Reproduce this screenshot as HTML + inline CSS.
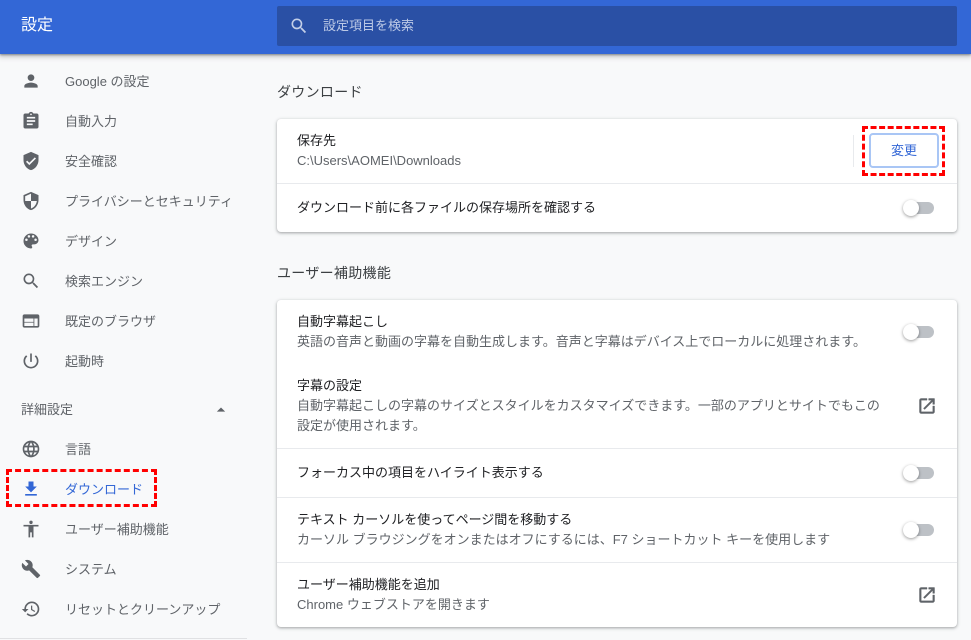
<!DOCTYPE html>
<html lang="ja"><head><meta charset="utf-8"><title>設定</title>
<style>
*{box-sizing:border-box}
html,body{margin:0;padding:0}
body{width:971px;height:640px;overflow:hidden;position:relative;background:#f8f9fa;font-family:"Liberation Sans","Noto Sans CJK JP",sans-serif;font-size:13px;color:#202124}
.t{position:absolute;white-space:nowrap;line-height:20px}
#hdr{position:absolute;left:0;top:0;width:971px;height:54px;background:#3367d6;box-shadow:0 1px 2px rgba(60,64,67,.5),0 2px 5px 1px rgba(60,64,67,.25)}
#srch{position:absolute;left:277px;top:6px;width:680px;height:40px;background:#2a50a5;border-radius:2px}
.nav{position:absolute;left:65px;color:#5f6368;line-height:20px;white-space:nowrap;font-size:13px}
svg.i{position:absolute;width:20px;height:20px;margin:2px;fill:#5f6368}
.card{position:absolute;left:277px;width:680px;background:#fff;border-radius:4px;box-shadow:0 1px 2px rgba(60,64,67,.3),0 1px 3px 1px rgba(60,64,67,.15)}
.hr{position:absolute;left:277px;width:680px;height:1px;background:#e8eaed}
.h{position:absolute;left:277px;font-size:14px;letter-spacing:.3px;color:#3c4043;line-height:20px;white-space:nowrap}
.p{position:absolute;left:297px;color:#202124;font-size:13px;line-height:20px;white-space:nowrap}
.s{position:absolute;left:297px;color:#5f6368;font-size:13px;line-height:20px;white-space:nowrap}
.tg{position:absolute;left:904px;width:30px;height:12px;background:#bdc1c6;border-radius:6px}
.tg:before{content:"";position:absolute;left:-1px;top:-2px;width:16px;height:16px;border-radius:50%;background:#fff;box-shadow:0 1px 3px rgba(0,0,0,.4)}
.ext{stroke:#5f6368;stroke-width:.5}
</style></head><body>
<div id="hdr"></div>
<div class="t" style="left:21px;top:16px;font-size:16px;color:#fff">設定</div>
<div id="srch"></div>
<svg class="i" style="left:287px;top:14px;fill:#c3cfe8" viewBox="0 0 24 24"><path d="M15.5 14h-.79l-.28-.27A6.47 6.47 0 0 0 16 9.5 6.5 6.5 0 1 0 9.5 16c1.61 0 3.09-.59 4.23-1.57l.27.28v.79l5 4.99L20.49 19l-4.99-5zm-6 0C7.01 14 5 11.99 5 9.5S7.01 5 9.5 5 14 7.01 14 9.5 11.99 14 9.5 14z"/></svg>
<div class="t" style="left:323px;top:16px;color:#bcc9e6;font-size:13px">設定項目を検索</div>

<svg class="i" style="left:19px;top:69px" viewBox="0 0 24 24"><path d="M12 12c2.21 0 4-1.79 4-4s-1.79-4-4-4-4 1.79-4 4 1.79 4 4 4zm0 2c-2.67 0-8 1.34-8 4v2h16v-2c0-2.66-5.33-4-8-4z"/></svg>
<div class="nav" style="top:72px">Google の設定</div>
<svg class="i" style="left:19px;top:109px" viewBox="0 0 24 24"><path d="M19 3h-4.18C14.4 1.84 13.3 1 12 1c-1.3 0-2.4.84-2.82 2H5c-1.1 0-2 .9-2 2v14c0 1.1.9 2 2 2h14c1.1 0 2-.9 2-2V5c0-1.1-.9-2-2-2zm-7 0c.55 0 1 .45 1 1s-.45 1-1 1-1-.45-1-1 .45-1 1-1zm2 14H7v-2h7v2zm3-4H7v-2h10v2zm0-4H7V7h10v2z"/></svg>
<div class="nav" style="top:112px">自動入力</div>
<svg class="i" style="left:19px;top:149px" viewBox="0 0 24 24"><path d="M12 1L3 5v6c0 5.55 3.84 10.74 9 12 5.16-1.26 9-6.45 9-12V5l-9-4zm-2 16l-4-4 1.41-1.41L10 14.17l6.59-6.59L18 9l-8 8z"/></svg>
<div class="nav" style="top:152px">安全確認</div>
<svg class="i" style="left:19px;top:189px" viewBox="0 0 24 24"><path d="M12 1L3 5v6c0 5.55 3.84 10.74 9 12 5.16-1.26 9-6.45 9-12V5l-9-4zm0 10.99h7c-.53 4.12-3.28 7.79-7 8.94V12H5V6.3l7-3.11v8.8z"/></svg>
<div class="nav" style="top:192px">プライバシーとセキュリティ</div>
<svg class="i" style="left:19px;top:229px" viewBox="0 0 24 24"><path d="M12 3a9 9 0 0 0 0 18c.83 0 1.5-.67 1.5-1.5 0-.39-.15-.74-.39-1.01-.23-.26-.38-.61-.38-.99 0-.83.67-1.5 1.5-1.5H16c2.76 0 5-2.24 5-5 0-4.42-4.03-8-9-8zm-5.5 9a1.5 1.5 0 1 1 0-3 1.5 1.5 0 0 1 0 3zm3-4a1.5 1.5 0 1 1 0-3 1.5 1.5 0 0 1 0 3zm5 0a1.5 1.5 0 1 1 0-3 1.5 1.5 0 0 1 0 3zm3 4a1.5 1.5 0 1 1 0-3 1.5 1.5 0 0 1 0 3z"/></svg>
<div class="nav" style="top:232px">デザイン</div>
<svg class="i" style="left:19px;top:269px" viewBox="0 0 24 24"><path d="M15.5 14h-.79l-.28-.27A6.47 6.47 0 0 0 16 9.5 6.5 6.5 0 1 0 9.5 16c1.61 0 3.09-.59 4.23-1.57l.27.28v.79l5 4.99L20.49 19l-4.99-5zm-6 0C7.01 14 5 11.99 5 9.5S7.01 5 9.5 5 14 7.01 14 9.5 11.99 14 9.5 14z"/></svg>
<div class="nav" style="top:272px">検索エンジン</div>
<svg class="i" style="left:19px;top:309px" viewBox="0 0 24 24"><path d="M20 4H4c-1.1 0-2 .9-2 2v12c0 1.1.9 2 2 2h16c1.1 0 2-.9 2-2V6c0-1.1-.9-2-2-2zm-5 14H4v-4h11v4zm0-5H4V9h11v4zm5 5h-4V9h4v9z"/></svg>
<div class="nav" style="top:312px">既定のブラウザ</div>
<svg class="i" style="left:19px;top:349px" viewBox="0 0 24 24"><path d="M13 3h-2v10h2V3zm4.83 2.17l-1.42 1.42A6.92 6.92 0 0 1 19 12c0 3.87-3.13 7-7 7s-7-3.13-7-7c0-2.19 1.01-4.14 2.58-5.42L6.17 5.17A8.93 8.93 0 0 0 3 12a9 9 0 0 0 18 0c0-2.74-1.23-5.18-3.17-6.83z"/></svg>
<div class="nav" style="top:352px">起動時</div>

<div class="nav" style="left:21px;top:400px">詳細設定</div>
<svg class="i" style="left:209px;top:398px" viewBox="0 0 24 24"><path d="M7 14l5-5 5 5z"/></svg>

<svg class="i" style="left:19px;top:437px" viewBox="0 0 24 24"><path d="M11.99 2C6.47 2 2 6.48 2 12s4.47 10 9.99 10C17.52 22 22 17.52 22 12S17.52 2 11.99 2zm6.93 6h-2.95a15.65 15.65 0 0 0-1.38-3.56A8.03 8.03 0 0 1 18.92 8zM12 4.04c.83 1.2 1.48 2.53 1.91 3.96h-3.82c.43-1.43 1.08-2.76 1.91-3.96zM4.26 14C4.1 13.36 4 12.69 4 12s.1-1.36.26-2h3.38c-.08.66-.14 1.32-.14 2 0 .68.06 1.34.14 2H4.26zm.82 2h2.95c.32 1.25.78 2.45 1.38 3.56A7.987 7.987 0 0 1 5.08 16zm2.95-8H5.08a7.987 7.987 0 0 1 4.33-3.56A15.65 15.65 0 0 0 8.03 8zM12 19.96c-.83-1.2-1.48-2.53-1.91-3.96h3.82c-.43 1.43-1.08 2.76-1.91 3.96zM14.34 14H9.66c-.09-.66-.16-1.32-.16-2 0-.68.07-1.35.16-2h4.68c.09.65.16 1.32.16 2 0 .68-.07 1.34-.16 2zm.25 5.56c.6-1.11 1.06-2.31 1.38-3.56h2.95a8.03 8.03 0 0 1-4.33 3.56zM16.36 14c.08-.66.14-1.32.14-2 0-.68-.06-1.34-.14-2h3.38c.16.64.26 1.31.26 2s-.1 1.36-.26 2h-3.38z"/></svg>
<div class="nav" style="top:440px">言語</div>
<svg class="i" style="left:19px;top:477px;fill:#3367d6" viewBox="0 0 24 24"><path d="M19 9h-4V3H9v6H5l7 7 7-7zM5 18v2h14v-2H5z"/></svg>
<div class="nav" style="top:480px;color:#3367d6">ダウンロード</div>
<svg class="i" style="left:19px;top:517px" viewBox="0 0 24 24"><path d="M12 2a2 2 0 1 1 0 4 2 2 0 0 1 0-4zm9 7h-6v13h-2v-6h-2v6H9V9H3V7h18v2z"/></svg>
<div class="nav" style="top:520px">ユーザー補助機能</div>
<svg class="i" style="left:19px;top:557px" viewBox="0 0 24 24"><path d="M22.7 19l-9.1-9.1c.9-2.3.4-5-1.5-6.9-2-2-5-2.4-7.4-1.3L9 6 6 9 1.6 4.7C.4 7.1.9 10.1 2.9 12.1c1.9 1.9 4.6 2.4 6.9 1.5l9.1 9.1c.4.4 1 .4 1.4 0l2.3-2.3c.5-.4.5-1.1.1-1.4z"/></svg>
<div class="nav" style="top:560px">システム</div>
<svg class="i" style="left:19px;top:597px" viewBox="0 0 24 24"><path d="M13 3a9 9 0 0 0-9 9H1l3.89 3.89.07.14L9 12H6c0-3.87 3.13-7 7-7s7 3.13 7 7-3.13 7-7 7c-1.93 0-3.68-.79-4.94-2.06l-1.42 1.42A8.954 8.954 0 0 0 13 21a9 9 0 0 0 0-18zm-1 5v5l4.28 2.54.72-1.21-3.5-2.08V8H12z"/></svg>
<div class="nav" style="top:600px">リセットとクリーンアップ</div>
<div style="position:absolute;left:0;top:638px;width:247px;height:1px;background:#e0e1e3"></div>

<div style="position:absolute;left:6px;top:469px;width:151px;height:38px;border:3px dashed #f00"></div>

<div class="h" style="top:82px">ダウンロード</div>
<div class="card" style="top:119px;height:113px"></div>
<div class="p" style="top:131px">保存先</div>
<div class="s" style="top:151px">C:\Users\AOMEI\Downloads</div>
<div style="position:absolute;left:853px;top:135px;width:1px;height:32px;background:#e8eaed"></div>
<div style="position:absolute;left:869px;top:133px;width:70px;height:35px;border:2px solid #a9c6f5;border-radius:4px;background:#fff;color:#3367d6;font-size:13px;line-height:31px;text-align:center">変更</div>
<div style="position:absolute;left:862px;top:126px;width:83px;height:50px;border:3px dashed #f00"></div>
<div class="hr" style="top:183px"></div>
<div class="p" style="top:198px">ダウンロード前に各ファイルの保存場所を確認する</div>
<div class="tg" style="top:202px"></div>

<div class="h" style="top:263px">ユーザー補助機能</div>
<div class="card" style="top:300px;height:327px"></div>
<div class="p" style="top:312px">自動字幕起こし</div>
<div class="s" style="top:332px">英語の音声と動画の字幕を自動生成します。音声と字幕はデバイス上でローカルに処理されます。</div>
<div class="tg" style="top:326px"></div>
<div class="p" style="top:376px">字幕の設定</div>
<div class="s" style="top:396px">自動字幕起こしの字幕のサイズとスタイルをカスタマイズできます。一部のアプリとサイトでもこの</div>
<div class="s" style="top:416px">設定が使用されます。</div>
<svg class="i ext" style="left:915px;top:394px" viewBox="0 0 24 24"><path d="M19 19H5V5h7V3H5a2 2 0 0 0-2 2v14a2 2 0 0 0 2 2h14c1.1 0 2-.9 2-2v-7h-2v7zM14 3v2h3.59l-9.83 9.83 1.41 1.41L19 6.41V10h2V3h-7z"/></svg>
<div class="hr" style="top:448px"></div>
<div class="p" style="top:463px">フォーカス中の項目をハイライト表示する</div>
<div class="tg" style="top:467px"></div>
<div class="hr" style="top:497px"></div>
<div class="p" style="top:510px">テキスト カーソルを使ってページ間を移動する</div>
<div class="s" style="top:530px">カーソル ブラウジングをオンまたはオフにするには、F7 ショートカット キーを使用します</div>
<div class="tg" style="top:524px"></div>
<div class="hr" style="top:562px"></div>
<div class="p" style="top:575px">ユーザー補助機能を追加</div>
<div class="s" style="top:595px">Chrome ウェブストアを開きます</div>
<svg class="i ext" style="left:915px;top:583px" viewBox="0 0 24 24"><path d="M19 19H5V5h7V3H5a2 2 0 0 0-2 2v14a2 2 0 0 0 2 2h14c1.1 0 2-.9 2-2v-7h-2v7zM14 3v2h3.59l-9.83 9.83 1.41 1.41L19 6.41V10h2V3h-7z"/></svg>
</body></html>
